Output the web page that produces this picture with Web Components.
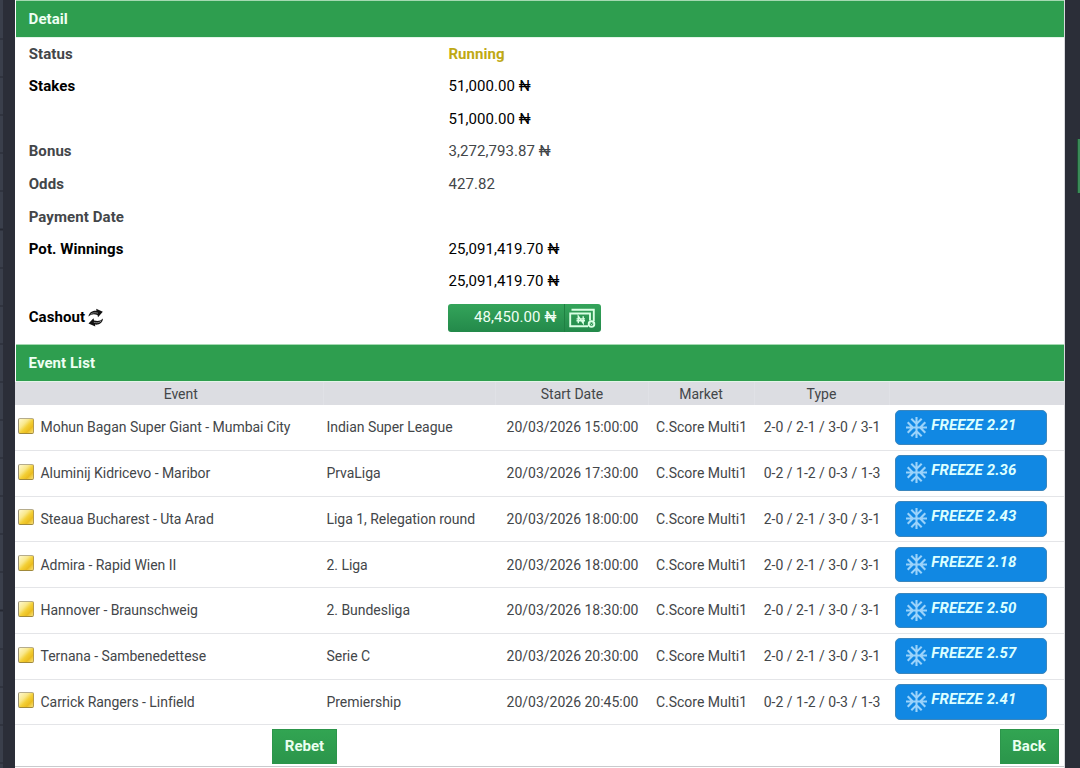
<!DOCTYPE html>
<html lang="en">
<head>
<meta charset="utf-8">
<title>Bet detail</title>
<style>
  body {
    margin: 0;
    width: 1080px;
    height: 768px;
    overflow: hidden;
    background: #2b2e38;
    color: #434649;
    font-family: Roboto, "Liberation Sans", sans-serif;
    font-size: 15px;
  }
</style>
</head>
<body>
<bet-coupon>
  <section-title>Detail</section-title>
  <detail-row label="Status" height="32"><b style="color:#bfa914">Running</b></detail-row>
  <detail-row label="Stakes" height="32" strong>51,000.00 ₦</detail-row>
  <detail-row height="33" strong>51,000.00 ₦</detail-row>
  <detail-row label="Bonus" height="32">3,272,793.87 ₦</detail-row>
  <detail-row label="Odds" height="33">427.82</detail-row>
  <detail-row label="Payment Date" height="33"></detail-row>
  <detail-row label="Pot. Winnings" height="32" strong>25,091,419.70 ₦</detail-row>
  <detail-row height="32" strong>25,091,419.70 ₦</detail-row>
  <detail-row label="Cashout" height="40" strong refresh><cashout-button>48,450.00 ₦</cashout-button></detail-row>
  <section-title class="events">Event List</section-title>
  <event-table></event-table>
  <coupon-footer></coupon-footer>
</bet-coupon>

<script>
class BetCoupon extends HTMLElement {
  constructor() {
    super();
    this._root = this.attachShadow({ mode: 'open' });
    this._root.innerHTML = `
      <style>
        :host { display: flex; height: 768px; }
        .left {
          width: 3px;
          margin-right: 12px;
          background: repeating-linear-gradient(#3a3f4b 0 37px, #262932 37px 38.1px);
          background-position-y: 1.5px;
        }
        .panel {
          width: 1050px;
          height: 768px;
          box-sizing: border-box;
          background: #fff;
          border-right: 1px solid #d9dade;
          overflow: hidden;
        }
        ::slotted(.events) { margin-top: 7px; }
        .right { flex: 1; position: relative; }
        .right i {
          position: absolute;
          right: 0;
          top: 139px;
          width: 3px;
          height: 54px;
          box-sizing: border-box;
          border-left: 1px solid #1d5032;
          background: #3b8a58;
        }
      </style>
      <div class="left"></div>
      <div class="panel"><slot></slot></div>
      <div class="right"><i></i></div>
    `;
  }
}

class SectionTitle extends HTMLElement {
  constructor() {
    super();
    this._root = this.attachShadow({ mode: 'open' });
    this._root.innerHTML = `
      <style>
        :host {
          display: flex;
          align-items: center;
          box-sizing: border-box;
          height: 38px;
          margin-left: 1px;
          padding-left: 12.600px;
          border-top: 1px solid #a5d9b2;
          border-bottom: 1px solid #e3f5e8;
          background: #2e9e4f;
          color: #eefff3;
          font-size: 15px;
          font-weight: bold;
          letter-spacing: .05px;
        }
      </style>
      <slot></slot>
    `;
  }
}

class DetailRow extends HTMLElement {
  constructor() {
    super();
    const label = this.getAttribute('label') || '';
    const height = this.getAttribute('height');
    const color = this.hasAttribute('strong') ? '#000' : 'inherit';
    this._root = this.attachShadow({ mode: 'open' });
    this._root.innerHTML = `
      <style>
        :host {
          display: grid;
          grid-template-columns: 419.700px 1fr;
          align-items: center;
          height: ${height}px;
          padding-left: 13.700px;
          color: ${color};
          letter-spacing: .08px;
        }
        .label {
          display: flex;
          align-items: center;
          gap: 2px;
          font-weight: bold;
        }
        svg { margin-top: 1px; }
      </style>
      <div class="label">${label}${this.hasAttribute('refresh')
        ? `<svg width="18" height="20" viewBox="0 0 18 20">
            <path d="M1.500 8.500C2 4.500 5 2.300 9.500 2.700L9.200 .8 15.800 3.700 11 9.200 10.500 7C7 5.800 4.500 6 1.500 8.500Z" fill="#111"/>
            <path d="M16 10.500C15.500 15 12.500 17 8 16.600L8.300 18.600 1.500 15.500 6.500 10.300 7 12.500C11 13.500 13.500 13 16 10.500Z" fill="#111"/>
            <path d="M3.500 6.300C6 4.400 8.500 4.500 11 5.200M14.300 13C12 15 9.500 15 6.800 14.300" fill="none" stroke="#999" stroke-width=".8"/>
          </svg>`
        : ''
      }</div>
      <div><slot></slot></div>
    `;
  }
}

class CashoutButton extends HTMLElement {
  constructor() {
    super();
    this._root = this.attachShadow({ mode: 'open' });
    this._root.innerHTML = `
      <style>
        :host {
          display: flex;
          width: 153px;
          height: 28px;
          margin-top: 1px;
          border-radius: 3px;
          overflow: hidden;
          background: linear-gradient(#34a45a, #23894a);
          color: #f0fff4;
        }
        .amount {
          width: 108px;
          padding-right: 8px;
          border-right: 1px solid #1f8042;
          line-height: 27px;
          text-align: right;
        }
        svg { margin: 3px 0 0 4px; }
      </style>
      <div class="amount"><slot></slot></div>
      <svg width="27" height="22" viewBox="0 0 27 22" fill="none" stroke="#d9ffe3" stroke-width="1.900">
        <path d="M2.500 2.800H24.800V14"/>
        <path d="M19 19.200H1.200V6.500H21V13.500"/>
        <path d="M9.300 16.200V9.300L14.200 16.200V9.300M7.500 11.900H16M7.500 13.700H16" stroke-width="1.400"/>
        <circle cx="22.500" cy="17" r="2.800"/>
        <path d="M21.500 16.500 22.500 17.700 23.500 16.500" stroke-width=".8"/>
      </svg>
    `;
  }
}

class FreezeButton extends HTMLElement {
  constructor() {
    super();
    this._root = this.attachShadow({ mode: 'open' });
    this._root.innerHTML = `
      <style>
        :host {
          display: flex;
          box-sizing: border-box;
          width: 152px;
          height: 35.500px;
          padding-left: 10.500px;
          border: 1px solid #3b86bd;
          border-radius: 5px;
          background: #1188e3;
          color: #dcffff;
          font-size: 15px;
          font-weight: bold;
          font-style: italic;
          line-height: 29px;
          letter-spacing: .15px;
        }
        svg { margin: 6px 4.300px 0 0; }
      </style>
      <svg width="21" height="21" viewBox="2 2 20 20" fill="#9bd3fb">
        <path d="M22 11h-4.170l3.240-3.240-1.410-1.420L15 11h-2V9l4.660-4.660-1.420-1.410L13 6.170V2h-2v4.170L7.760 2.930 6.340 4.340 11 9v2H9L4.340 6.340 2.930 7.760 6.170 11H2v2h4.170l-3.240 3.240 1.410 1.420L9 13h2v2l-4.660 4.660 1.420 1.410L11 17.830V22h2v-4.170l3.240 3.240 1.420-1.410L13 15v-2h2l4.660 4.660 1.410-1.420L17.830 13H22z"/>
      </svg>
      <span><slot></slot></span>
    `;
  }
}

const EVENTS = [
  ['Mohun Bagan Super Giant - Mumbai City', 'Indian Super League', '15:00:00', '2-0 / 2-1 / 3-0 / 3-1', '2.21'],
  ['Aluminij Kidricevo - Maribor', 'PrvaLiga', '17:30:00', '0-2 / 1-2 / 0-3 / 1-3', '2.36'],
  ['Steaua Bucharest - Uta Arad', 'Liga 1, Relegation round', '18:00:00', '2-0 / 2-1 / 3-0 / 3-1', '2.43'],
  ['Admira - Rapid Wien II', '2. Liga', '18:00:00', '2-0 / 2-1 / 3-0 / 3-1', '2.18'],
  ['Hannover - Braunschweig', '2. Bundesliga', '18:30:00', '2-0 / 2-1 / 3-0 / 3-1', '2.50'],
  ['Ternana - Sambenedettese', 'Serie C', '20:30:00', '2-0 / 2-1 / 3-0 / 3-1', '2.57'],
  ['Carrick Rangers - Linfield', 'Premiership', '20:45:00', '0-2 / 1-2 / 0-3 / 1-3', '2.41']
];

class EventTable extends HTMLElement {
  constructor() {
    super();
    this._root = this.attachShadow({ mode: 'open' });
    this._root.innerHTML = `
      <style>
        :host { display: block; font-size: 14px; }
        .row {
          display: grid;
          grid-template-columns: 308.500px 172px 153px 106px 135px 1fr;
          align-items: center;
          box-sizing: border-box;
          height: 45.750px;
          border-bottom: 1px solid #e4e5e8;
          white-space: nowrap;
        }
        .head {
          height: 23px;
          border: 0;
          background: #dcdde2;
          text-align: center;
        }
        .head div {
          height: 23px;
          line-height: 24px;
          box-sizing: border-box;
          border-right: 1px solid #e0e1e6;
        }
        .head div:first-child { padding-left: 24px; }
        .head div:nth-child(3) { padding-left: 1px; }
        .head div:last-child { border: 0; }
        .event { display: flex; align-items: center; gap: 7px; padding-left: 2.500px; }
        .event i {
          width: 14px;
          height: 14px;
          border: 1px solid #b59a45;
          border-color: #b5ac8c #b69b4d #a0893a #999177;
          border-radius: 2px;
          background: linear-gradient(135deg, #fff9cf 0%, #f9e88c 35%, #f3cf35 55%, #ebbd20 75%, #f7e17c 100%);
          margin-top: -3px;
        }
        .event, .league { letter-spacing: -.04px; }
        .league { padding-left: 3px; }
        .center { text-align: center; }
        .date { padding-left: 1px; }
        freeze-button { margin: 0 0 0 5px; }
      </style>
      <div class="row head">
        <div>Event</div><div></div><div>Start Date</div><div>Market</div><div>Type</div><div></div>
      </div>
      ${EVENTS.map(([name, league, time, type, odd]) => `
        <div class="row">
          <div class="event"><i></i><span>${name}</span></div>
          <div class="league">${league}</div>
          <div class="center date">20/03/2026 ${time}</div>
          <div class="center">C.Score Multi1</div>
          <div class="center">${type}</div>
          <freeze-button>FREEZE ${odd}</freeze-button>
        </div>`).join('')}
    `;
  }
}

class CouponFooter extends HTMLElement {
  constructor() {
    super();
    this._root = this.attachShadow({ mode: 'open' });
    this._root.innerHTML = `
      <style>
        :host {
          display: flex;
          justify-content: space-between;
          box-sizing: border-box;
          height: 41.750px;
          padding: 3.750px 5.500px 0 257px;
          border-bottom: 1px solid #c9cacd;
        }
        button {
          height: 35px;
          padding: 0 0 1px;
          border: 1px solid #2c954b;
          background: linear-gradient(#32a552, #2b954b);
          color: #eafff0;
          font: bold 15px Roboto, sans-serif;
        }
        .rebet { width: 65px; }
        .back { width: 59px; }
      </style>
      <button class="rebet">Rebet</button>
      <button class="back">Back</button>
    `;
  }
}

window.customElements.define('section-title', SectionTitle);
window.customElements.define('cashout-button', CashoutButton);
window.customElements.define('detail-row', DetailRow);
window.customElements.define('freeze-button', FreezeButton);
window.customElements.define('event-table', EventTable);
window.customElements.define('coupon-footer', CouponFooter);
window.customElements.define('bet-coupon', BetCoupon);
</script>
</body>
</html>
